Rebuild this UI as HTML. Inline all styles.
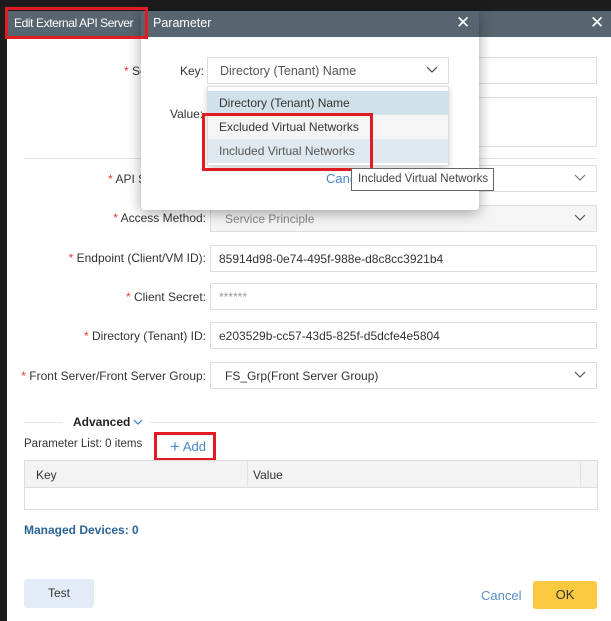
<!DOCTYPE html>
<html><head><style>
*{box-sizing:border-box;margin:0;padding:0}
body{width:611px;height:621px;overflow:hidden;background:#1c1c1c;font-family:"Liberation Sans",sans-serif;font-size:12px;color:#333;position:relative}
.a{position:absolute}
.main{left:7px;top:11px;width:604px;height:610px;background:#fff}
.hdr{background:#56656f;color:#fff;font-size:12.5px}
.lbl{text-align:right;width:200px;left:6px;font-size:12px;color:#333}
.lbl b{color:#e53935;font-weight:normal}
.inp{left:210px;width:387px;height:27px;border:1px solid #ddd;background:#fff;padding:6px 8px;font-size:12px;color:#333;white-space:nowrap}
.chev{position:absolute;right:10px;top:5px;width:12px;height:12px}
.red{border:3px solid #e01b24}
</style></head><body>
<div class="a main"></div>
<div class="a hdr" style="left:7px;top:11px;width:604px;height:26px"></div>
<div class="a" style="left:590px;top:13px;color:#fff;font-size:17px">✕</div>

<div class="a lbl" style="top:64px"><b>*</b> Server Name:</div>
<div class="a inp" style="top:57px"></div>
<div class="a lbl" style="top:107px">Description:</div>
<div class="a inp" style="top:97px;height:50px"></div>
<div class="a" style="left:24px;top:158px;width:573px;height:1px;background:#e3e3e3"></div>
<div class="a lbl" style="top:172px"><b>*</b> API Server Type:</div>
<div class="a inp" style="top:165px"><svg class="chev" viewBox="0 0 12 12"><path d="M1 4l5 5 5-5" fill="none" stroke="#777" stroke-width="1.2"/></svg></div>
<div class="a lbl" style="top:211px"><b>*</b> Access Method:</div>
<div class="a inp" style="top:205px;background:#f5f5f5;color:#888;padding-left:14px">Service Principle<svg class="chev" viewBox="0 0 12 12"><path d="M1 4l5 5 5-5" fill="none" stroke="#555" stroke-width="1.2"/></svg></div>
<div class="a lbl" style="top:251px"><b>*</b> Endpoint (Client/VM ID):</div>
<div class="a inp" style="top:245px">85914d98-0e74-495f-988e-d8c8cc3921b4</div>
<div class="a lbl" style="top:290px"><b>*</b> Client Secret:</div>
<div class="a inp" style="top:283px;color:#999">******</div>
<div class="a lbl" style="top:329px"><b>*</b> Directory (Tenant) ID:</div>
<div class="a inp" style="top:322px">e203529b-cc57-43d5-825f-d5dcfe4e5804</div>
<div class="a lbl" style="top:369px"><b>*</b> Front Server/Front Server Group:</div>
<div class="a inp" style="top:362px;padding-left:14px">FS_Grp(Front Server Group)<svg class="chev" viewBox="0 0 12 12"><path d="M1 4l5 5 5-5" fill="none" stroke="#555" stroke-width="1.2"/></svg></div>

<div class="a" style="left:24px;top:422px;width:39px;height:1px;background:#e3e3e3"></div>
<div class="a" style="left:150px;top:422px;width:447px;height:1px;background:#e3e3e3"></div>
<div class="a" style="left:73px;top:415px;font-weight:bold;color:#222">Advanced</div>
<svg class="a" style="left:133px;top:418px" width="10" height="8" viewBox="0 0 10 8"><path d="M1 2l4 4 4-4" fill="none" stroke="#3b7bbf" stroke-width="1.2"/></svg>
<div class="a" style="left:24px;top:438px;font-size:11.5px">Parameter List: 0 items</div>
<div class="a" style="left:170px;top:436px;color:#4a86c5;font-size:13px"><span style="font-size:17px;position:relative;top:1px">+</span> Add</div>
<div class="a red" style="left:154px;top:432px;width:62px;height:29px"></div>
<div class="a" style="left:24px;top:460px;width:574px;height:50px;border:1px solid #ddd"></div>
<div class="a" style="left:25px;top:461px;width:572px;height:27px;background:#f3f3f3;border-bottom:1px solid #ddd"></div>
<div class="a" style="left:247px;top:461px;width:1px;height:27px;background:#e3e3e3"></div>
<div class="a" style="left:580px;top:461px;width:1px;height:27px;background:#e3e3e3"></div>
<div class="a" style="left:36px;top:468px">Key</div>
<div class="a" style="left:253px;top:468px">Value</div>
<div class="a" style="left:24px;top:523px;font-weight:bold;color:#2a6496">Managed Devices: 0</div>
<div class="a" style="left:24px;top:579px;width:70px;height:29px;background:#e3ebf7;border-radius:3px;text-align:center;line-height:29px">Test</div>
<div class="a" style="left:481px;top:588px;color:#5b8fc7;font-size:13px">Cancel</div>
<div class="a" style="left:533px;top:581px;width:64px;height:28px;background:#fbc93f;border-radius:3px;text-align:center;line-height:28px;font-size:13px">OK</div>

<!-- parameter dialog -->
<div class="a" style="left:141px;top:11px;width:338px;height:199px;background:#fff;border-radius:0 0 4px 4px;box-shadow:0 3px 14px rgba(0,0,0,.35)"></div>
<div class="a hdr" style="left:141px;top:11px;width:338px;height:26px"></div>
<div class="a" style="left:14px;top:16px;color:#fff;font-size:12px;letter-spacing:-0.4px;white-space:nowrap">Edit External API Server</div>
<div class="a red" style="left:5px;top:7px;width:143px;height:32px"></div>
<div class="a" style="left:153px;top:16px;color:#fff;font-size:12.5px">Parameter</div>
<div class="a" style="left:456px;top:13px;color:#fff;font-size:17px">✕</div>
<div class="a" style="left:180px;top:64px">Key:</div>
<div class="a" style="left:170px;top:107px">Value:</div>
<div class="a inp" style="left:207px;top:57px;width:242px;color:#555;font-size:12.5px;padding-left:12px">Directory (Tenant) Name<svg class="chev" viewBox="0 0 12 12"><path d="M1 4l5 5 5-5" fill="none" stroke="#444" stroke-width="1.2"/></svg></div>
<div class="a" style="left:326px;top:171px;color:#4a86c5;font-size:13px">Cancel</div>
<div class="a" style="left:207px;top:86px;width:242px;height:80px;background:#fff;border:1px solid #ddd;box-shadow:0 2px 6px rgba(0,0,0,.2)"></div>
<div class="a" style="left:208px;top:91px;width:240px;height:24px;background:#d0e1ea;padding:5px 11px;font-size:12px">Directory (Tenant) Name</div>
<div class="a" style="left:208px;top:115px;width:240px;height:24px;background:#f5f5f5;padding:5px 11px;font-size:12px">Excluded Virtual Networks</div>
<div class="a" style="left:208px;top:139px;width:240px;height:24px;background:#dfe9ef;padding:5px 11px;font-size:12px;color:#555">Included Virtual Networks</div>
<div class="a red" style="left:202px;top:113px;width:171px;height:58px"></div>
<div class="a" style="left:351px;top:168px;width:143px;height:23px;background:#fff;border:1px solid #666;padding:4px 6px;font-size:11.5px;color:#444;white-space:nowrap;overflow:hidden">Included Virtual Networks</div>
</body></html>
